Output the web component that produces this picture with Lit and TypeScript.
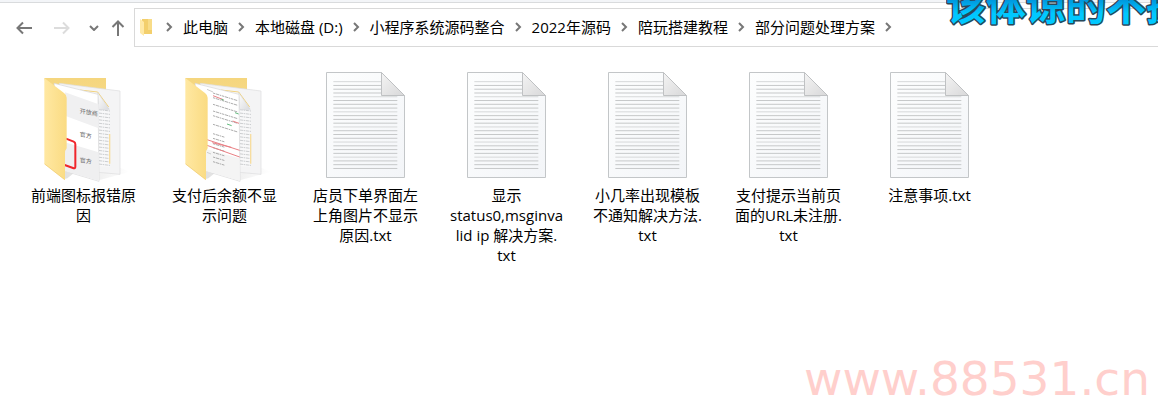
import { LitElement, html, css, svg } from "lit";
import { customElement, property } from "lit/decorators.js";

type Kind = "photos" | "article" | "text";
interface Entry {
  kind: Kind;
  lines: string[];
}

const PATH = ["此电脑", "本地磁盘 (D:)", "小程序系统源码整合", "2022年源码", "陪玩搭建教程", "部分问题处理方案"];

const ENTRIES: Entry[] = [
  { kind: "photos", lines: ["前端图标报错原", "因"] },
  { kind: "article", lines: ["支付后余额不显", "示问题"] },
  { kind: "text", lines: ["店员下单界面左", "上角图片不显示", "原因.txt"] },
  { kind: "text", lines: ["显示", "status0,msginva", "lid ip 解决方案.", "txt"] },
  { kind: "text", lines: ["小几率出现模板", "不通知解决方法.", "txt"] },
  { kind: "text", lines: ["支付提示当前页", "面的URL未注册.", "txt"] },
  { kind: "text", lines: ["注意事项.txt"] },
];

@customElement("file-icon")
export class FileIcon extends LitElement {
  @property() kind: Kind = "text";

  static styles = css`
    :host { display: block; }
    svg { display: block; width: 96px; height: 114px; }
    .tiny { font: 18px "Noto Sans CJK SC", sans-serif; fill: #666; }
  `;

  private textFile() {
    const rules = Array.from({ length: 24 }, (_, i) => {
      const y = 50 + i * 11.32;
      return svg`<path d="M70 ${y}H${i < 4 ? 214 : 262}" stroke=${i % 4 === 0 ? "#d6d8d9" : "#c6c8c9"} stroke-width="3"/>`;
    });
    return html`<svg viewBox="24 18 288 342" aria-hidden="true">
      <defs>
        <linearGradient id="paper" x1="0" y1="0" x2="1" y2="1"><stop offset="0" stop-color="#fdfefe"/><stop offset="1" stop-color="#f3f5f8"/></linearGradient>
        <linearGradient id="fold" x1="0" y1="0" x2="1" y2="1"><stop offset="0" stop-color="#f4f4f4"/><stop offset="1" stop-color="#d8d8d9"/></linearGradient>
      </defs>
      <path d="M49.500 22.500H214.500L283.500 91.500V337.500H49.500Z" fill="url(#paper)" stroke="#c3c6c8" stroke-width="3"/>
      ${rules}
      <path d="M214.500 22.500V91.500H283.500Z" fill="url(#fold)" stroke="#bfc1c3" stroke-width="3"/>
    </svg>`;
  }

  private photos() {
    return svg`
      <path d="M105 82L206 118V190L105 152Z" fill="#f0f0f1"/>
      <path d="M105 232L206 262V347L105 318Z" fill="#efeff0"/>
      <g class="tiny">
        <text transform="translate(149 144) skewY(10)">开放商</text>
        <text transform="translate(149 214) skewY(10)">官方</text>
        <text transform="translate(149 291) skewY(10)">官方</text>
      </g>
      <path d="M108 221L131 230Q136 232 136 238V305Q136 312 129 309L104 300" fill="none" stroke="#f0262c" stroke-width="6"/>`;
  }

  private article() {
    const rows = [84, 98, 118, 138, 152, 178, 206, 220, 236, 248, 262, 276, 290];
    return svg`
      <path d="M105 252L206 280V347L105 318Z" fill="#f4f4f4"/>
      ${rows.map((y, i) => svg`<path d="M126 ${y}L${i > 5 ? 162 : 200} ${y + (i > 5 ? 11 : 23)}" stroke="#9c9c9c" stroke-width="2.500" stroke-dasharray="7 2 11 2 4 2"/>`)}
      <path d="M126 92L157 104M185 168L204 175M108 224L206 256M108 241L206 276M124 233L181 247" stroke="#e98085" stroke-width="3" fill="none"/>
      <path d="M151 103L158 105M192 143L203 147M168 177L182 182" stroke="#62ba7d" stroke-width="3"/>
      <path d="M108 73L126 81M108 262L120 267" stroke="#ccc" stroke-width="3"/>`;
  }

  private folder() {
    return html`<svg viewBox="18 18 288 342" aria-hidden="true">
      <defs>
        <linearGradient id="flap" x1="0" y1="0" x2="1" y2="0"><stop offset="0" stop-color="#ffe8a2"/><stop offset="1" stop-color="#fadb82"/></linearGradient>
        <linearGradient id="back" x1="0" y1="0" x2="0" y2="1"><stop offset="0" stop-color="#f5d67e"/><stop offset="1" stop-color="#fbe4a0"/></linearGradient>
        <linearGradient id="shade" x1="0" y1="0" x2="1" y2="0"><stop offset="0" stop-color="#d3d3d3"/><stop offset="1" stop-color="#ffffff"/></linearGradient>
        <linearGradient id="turn" x1="0" y1="0" x2="1" y2="1"><stop offset="0" stop-color="#ffffff"/><stop offset="1" stop-color="#d9dadd"/></linearGradient>
      </defs>
      <path d="M205 325L270 308L300 320L262 331L206 346ZM103 320L132 324L112 340L104 342Z" fill="url(#shade)" opacity="0.700"/>
      <path d="M43 39H228V320H106Z" fill="url(#back)"/>
      <path d="M88 55L270 78V328L206 322L100 300Z" fill="#f4f4f5" stroke="#dcdcde" stroke-width="2"/>
      <path d="M120 68L200 78L238 128V306L206 303Z" fill="#f8f8f9"/>
      <path d="M150 75L203 81L236 126" fill="none" stroke="#f2d27c" stroke-width="3"/>
      ${Array.from({ length: 17 }, (_, i) => svg`<path d="M207 ${134 + i * 10.2}L240 ${138 + i * 10.2}" stroke="#c2c4c6" stroke-width="2.500" stroke-dasharray="9 2 5 2"/>`)}
      <path d="M239 207V296" stroke="#f7dda0" stroke-width="4"/>
      <path d="M203 83L238 133L206 134Z" fill="url(#turn)" stroke="#ced0d4" stroke-width="1.500"/>
      <path d="M72 55L204 88L207 349L104 318Z" fill="#ffffff" stroke="#d5d5d7" stroke-width="2"/>
      ${this.kind === "photos" ? this.photos() : this.article()}
      <path d="M43 39L102 84Q110 90 110 98V250Q103 258 105 268V345L43 297Z" fill="url(#flap)"/>
      <path d="M44 297L104 344" stroke="#efc969" stroke-width="2"/>
    </svg>`;
  }

  render() {
    return this.kind === "text" ? this.textFile() : this.folder();
  }
}

@customElement("address-bar")
export class AddressBar extends LitElement {
  static styles = css`
    :host { display: flex; align-items: stretch; height: 39px; }
    .nav { display: flex; align-items: center; width: 134px; flex: none; box-sizing: border-box; padding-left: 14px; }
    button { border: 0; padding: 0; margin: 0; background: none; font: inherit; color: #000; }
    .nav button { display: flex; justify-content: center; width: 20px; }
    .nav .forward { margin-left: 18px; }
    .nav .recent { margin-left: 12px; }
    .nav .up { margin-left: 4px; }
    svg { display: block; flex: none; fill: none; stroke: #777; stroke-width: 2; }
    .forward svg { stroke: #dcdcdc; }
    .path { display: flex; align-items: center; flex: 1; min-width: 0; overflow: hidden; border: 1px solid #d9d9d9; border-right: 0; padding: 0 0 2px 4px; white-space: nowrap; }
    .crumbs { display: flex; align-items: center; margin: 0; padding: 0 0 0 3px; list-style: none; }
    .crumbs li { display: flex; align-items: center; }
    .sep { margin: 0 10px; }
    .folder { stroke: none; }
  `;

  private sep() {
    return html`<svg class="sep" width="7" height="10" viewBox="0 0 7 10" aria-hidden="true"><path d="M1 1L5 5L1 9"/></svg>`;
  }

  render() {
    return html`
      <nav class="nav" aria-label="导航">
        <button aria-label="后退"><svg width="16" height="14" viewBox="0 0 16 14"><path d="M16 7H2M7 1.500L1.500 7L7 12.500"/></svg></button>
        <button class="forward" aria-label="前进"><svg width="16" height="14" viewBox="0 0 16 14"><path d="M0 7H14M9 1.500L14.500 7L9 12.500"/></svg></button>
        <button class="recent" aria-label="最近"><svg width="10" height="6" viewBox="0 0 10 6"><path d="M1 1L5 5L9 1"/></svg></button>
        <button class="up" aria-label="向上"><svg width="14" height="16" viewBox="0 0 14 16"><path d="M7 16V2M1.500 7L7 1.500L12.500 7"/></svg></button>
      </nav>
      <div class="path">
        <svg class="folder" width="14" height="18" viewBox="0 0 14 18" aria-hidden="true">
          <path d="M3 1H13V16H3Z" fill="#f3cf6c"/><path d="M9 1H13V12H9Z" fill="#f8dc88"/><path d="M1 1L5 4V18L1 15Z" fill="#ffe9a6"/>
        </svg>
        <ol class="crumbs">
          <li>${this.sep()}</li>
          ${PATH.map((name) => html`<li><button>${name}</button>${this.sep()}</li>`)}
        </ol>
      </div>`;
  }
}

@customElement("app-root")
export class AppRoot extends LitElement {
  static styles = css`
    :host {
      display: block; position: relative; min-height: 100vh; overflow: hidden; background: #fff; color: #000;
      font: 15px/20px "Open Sans", "Noto Sans CJK SC", sans-serif;
    }
    .ribbon { height: 2px; background: #f3f5f8; border-bottom: 1px solid #d9dbdd; }
    address-bar { margin-top: 5px; }
    .files { display: flex; flex-wrap: wrap; margin: 0; padding: 24px 13px; list-style: none; }
    .file { display: flex; flex-direction: column; align-items: center; width: 141px; text-align: center; white-space: nowrap; }
    .line { display: block; }
    .caption { position: absolute; top: -20px; right: 0; width: 212px; height: 52px; display: block; }
    .caption text { font: bold 40px "Noto Sans CJK SC", sans-serif; paint-order: stroke; stroke: #28485a; stroke-width: 3px; stroke-linejoin: round; fill: url(#sky); }
    .site { position: absolute; right: 8px; bottom: 4px; font: 47px/56px "DejaVu Sans", sans-serif; color: #ffcfcc; }
  `;

  render() {
    return html`
      <div class="ribbon"></div>
      <address-bar></address-bar>
      <ul class="files">
        ${ENTRIES.map((e) => html`<li class="file">
          <file-icon .kind=${e.kind}></file-icon>
          <div>${e.lines.map((l) => html`<span class="line">${l}</span>`)}</div>
        </li>`)}
      </ul>
      <svg class="caption" viewBox="0 0 212 52">
        <defs><linearGradient id="sky" x1="0" y1="0" x2="0" y2="1"><stop offset="0.300" stop-color="#0078c8"/><stop offset="0.680" stop-color="#00c8ff"/></linearGradient></defs>
        <text x="0" y="40">该体谅的不执</text>
      </svg>
      <div class="site">www.88531.cn</div>`;
  }
}
